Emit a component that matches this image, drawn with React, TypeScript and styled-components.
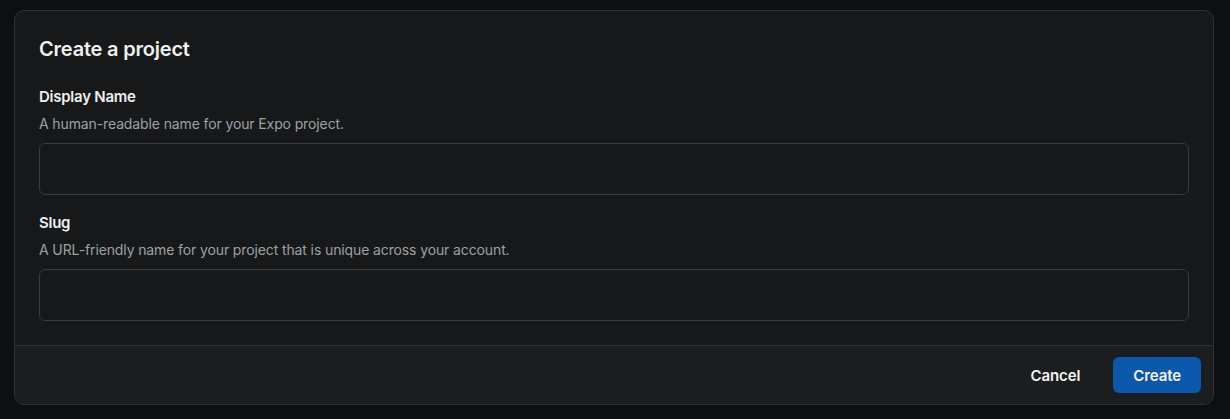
import React from "react";
import styled, { createGlobalStyle } from "styled-components";

const GlobalStyle = createGlobalStyle`
  html, body {
    margin: 0;
    padding: 0;
    background: #0e0f11;
    font-family: Inter, "Noto Sans", sans-serif;
    -webkit-font-smoothing: antialiased;
  }
  * { box-sizing: border-box; }
`;

const Page = styled.div`
  padding: 10px 16px 14px 14px;
`;

const Card = styled.form`
  background: #17181a;
  border: 1px solid #2f3134;
  border-radius: 10px;
  overflow: hidden;
  display: flex;
  flex-direction: column;
`;

const Body = styled.div`
  padding: 24px 24px 24px;
  display: flex;
  flex-direction: column;
`;

const Title = styled.h2`
  margin: 0 0 23px;
  font-size: 20px;
  line-height: 28px;
  font-weight: 600;
  color: #eeeff0;
  letter-spacing: -0.2px;
`;

const Fields = styled.div`
  display: flex;
  flex-direction: column;
  gap: 17px;
`;

const Field = styled.div`
  display: flex;
  flex-direction: column;
`;

const Label = styled.label`
  font-size: 15px;
  line-height: 20px;
  font-weight: 600;
  color: #eeeff0;
  letter-spacing: -0.25px;
  padding-top: 1px;
  margin-bottom: -1px;
`;

const Hint = styled.p`
  margin: 8px 0 9px;
  font-size: 14px;
  line-height: 20px;
  color: #9ba1a6;
  letter-spacing: -0.12px;
`;

const Input = styled.input`
  height: 52px;
  width: 100%;
  background: #17181a;
  border: 1px solid #393b3e;
  border-radius: 6px;
  color: #eeeff0;
  font-family: inherit;
  font-size: 15px;
  padding: 0 12px;
  outline: none;
`;

const Footer = styled.div`
  background: #1b1d1f;
  border-top: 1px solid #2f3134;
  display: flex;
  justify-content: flex-end;
  align-items: center;
  gap: 17px;
  padding: 11px 12px 11px;
`;

const Button = styled.button<{ $primary?: boolean }>`
  height: 36px;
  padding: 0 ${(p) => (p.$primary ? "20px" : "16px")};
  border: none;
  border-radius: 6px;
  font-family: inherit;
  font-size: 15px;
  font-weight: 600;
  letter-spacing: -0.1px;
  color: #f2f3f4;
  background: ${(p) => (p.$primary ? "#0b57ac" : "transparent")};
  cursor: pointer;
`;

export default function App() {
  return (
    <>
      <GlobalStyle />
      <Page>
        <Card onSubmit={(e) => e.preventDefault()}>
          <Body>
            <Title>Create a project</Title>
            <Fields>
              <Field>
                <Label htmlFor="displayName">Display Name</Label>
                <Hint>A human-readable name for your Expo project.</Hint>
                <Input id="displayName" />
              </Field>
              <Field>
                <Label htmlFor="slug">Slug</Label>
                <Hint>A URL-friendly name for your project that is unique across your account.</Hint>
                <Input id="slug" />
              </Field>
            </Fields>
          </Body>
          <Footer>
            <Button type="button">Cancel</Button>
            <Button type="submit" $primary>
              Create
            </Button>
          </Footer>
        </Card>
      </Page>
    </>
  );
}
